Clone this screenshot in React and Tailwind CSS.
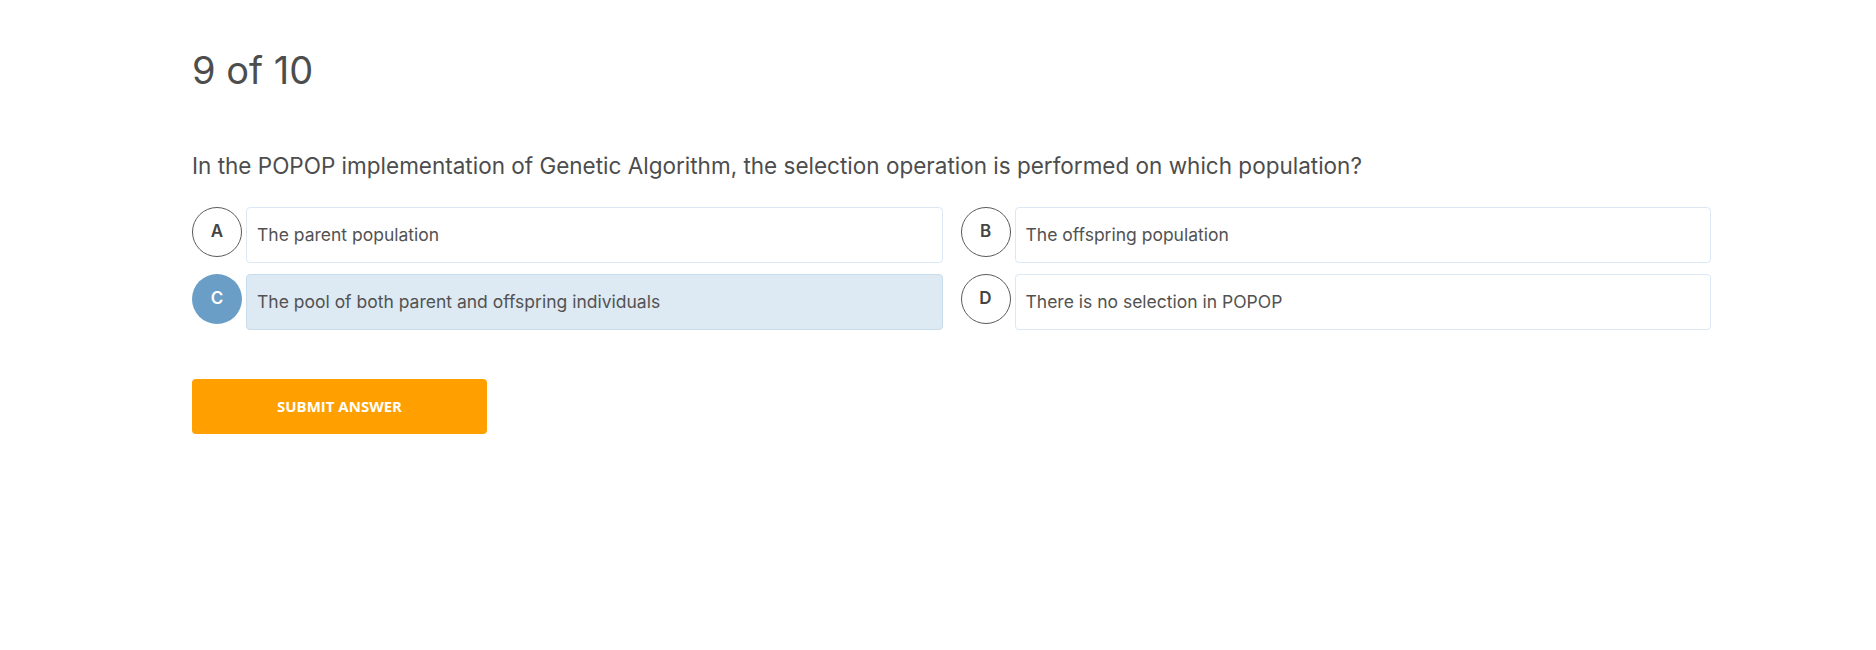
import React, { useState } from 'react';

const options = [
  { key: 'A', text: 'The parent population' },
  { key: 'B', text: 'The offspring population' },
  { key: 'C', text: 'The pool of both parent and offspring individuals' },
  { key: 'D', text: 'There is no selection in POPOP' },
];

const App = () => {
  const [selected, setSelected] = useState('C');

  return (
    <div className="min-h-[650px] bg-white font-['Inter',sans-serif] text-[#4d4d4d]">
      <div className="ml-[192px] w-[1519px] pt-[49px]">
        <h1 className="text-[38px] leading-[42px] font-normal">9 of 10</h1>

        <p className="mt-[60px] text-[22.5px] leading-[30px]">
          In the POPOP implementation of Genetic Algorithm, the selection operation is performed on which population?
        </p>

        <div className="mt-[26px] grid grid-cols-2 gap-x-[18px] gap-y-[11px]">
          {options.map((opt) => {
            const active = selected === opt.key;
            return (
              <button
                key={opt.key}
                type="button"
                onClick={() => setSelected(opt.key)}
                className="flex items-start gap-[4px] text-left"
              >
                <span
                  className={
                    active
                      ? 'flex h-[50px] w-[50px] shrink-0 items-center justify-center rounded-full bg-[#6a9ec6] text-[17px] font-semibold text-white'
                      : 'flex h-[50px] w-[50px] shrink-0 items-center justify-center rounded-full border border-[#5a5a5a] text-[17px] font-semibold text-[#444]'
                  }
                >
                  {opt.key}
                </span>
                <span
                  className={
                    active
                      ? 'flex h-[56px] flex-1 items-center rounded-[4px] border border-[#c9dcec] bg-[#dde9f3] px-[10px] text-[17.5px] text-[#525252]'
                      : 'flex h-[56px] flex-1 items-center rounded-[4px] border border-[#dce9f4] bg-white px-[10px] text-[17.5px] text-[#525252]'
                  }
                >
                  {opt.text}
                </span>
              </button>
            );
          })}
        </div>

        <button
          type="button"
          className="mt-[49px] flex h-[55px] w-[295px] items-center justify-center rounded-[4px] bg-[#ffa000] font-['Open_Sans',sans-serif] text-[15px] font-bold uppercase text-white"
        >
          Submit Answer
        </button>
      </div>
    </div>
  );
};

export default App;
